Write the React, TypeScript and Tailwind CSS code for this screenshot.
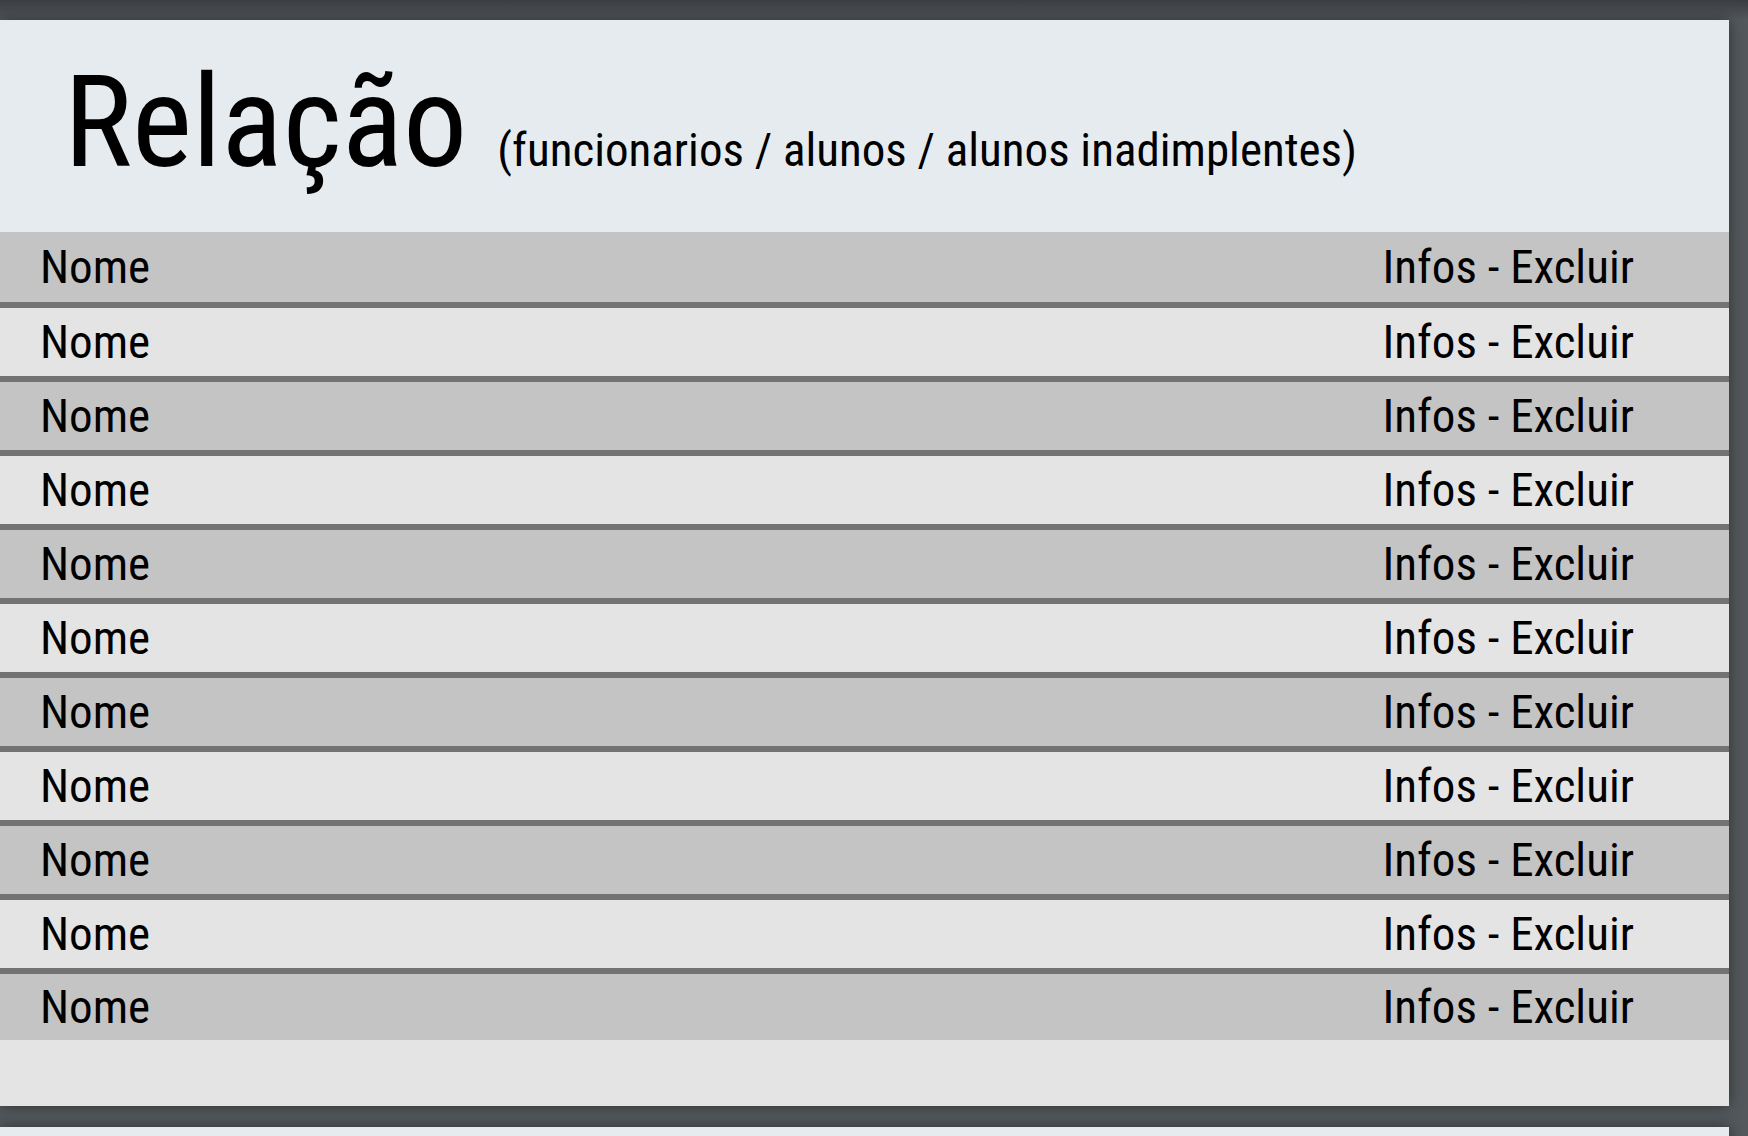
import React from 'react';

const rows = Array.from({ length: 11 }, (_, i) => i);

function Row({ index }: { index: number }) {
  const dark = index % 2 === 0;
  const height = index === 0 ? 'h-[70px]' : index === rows.length - 1 ? 'h-[66px]' : 'h-[68px]';
  return (
    <div
      className={`flex ${height} items-center justify-between pl-[40px] pr-[95px] ${
        dark ? 'bg-[#c4c4c4]' : 'bg-[#e4e4e4]'
      } ${index > 0 ? 'box-content border-t-[6px] border-[#737373]' : ''}`}
    >
      <span>Nome</span>
      <span>Infos - Excluir</span>
    </div>
  );
}

export default function App() {
  return (
    <div
      className="h-[1136px] overflow-hidden bg-gradient-to-b from-[#3b3e41] from-[0px] to-[#53585c] to-[20px] pt-[20px] text-black"
      style={{ fontFamily: '"Roboto Condensed", Roboto, sans-serif' }}
    >
      <div className="w-[1729px] bg-[#e4e4e4] shadow-[0_0_14px_rgba(0,0,0,0.45)]">
        <header className="flex h-[212px] items-baseline bg-[#e6ebef] pl-[64px] pt-[6px]">
          <h1 className="text-[128px] font-normal">Relação</h1>
          <span className="ml-[30px] text-[47px]">(funcionarios / alunos / alunos inadimplentes)</span>
        </header>

        <div className="text-[47px]">
          {rows.map((i) => (
            <Row key={i} index={i} />
          ))}
        </div>

        <div className="h-[66px]" />
      </div>

      <div className="mt-[21px] h-[40px] w-[1729px] bg-[#e6ebef] shadow-[0_0_14px_rgba(0,0,0,0.45)]" />
    </div>
  );
}
